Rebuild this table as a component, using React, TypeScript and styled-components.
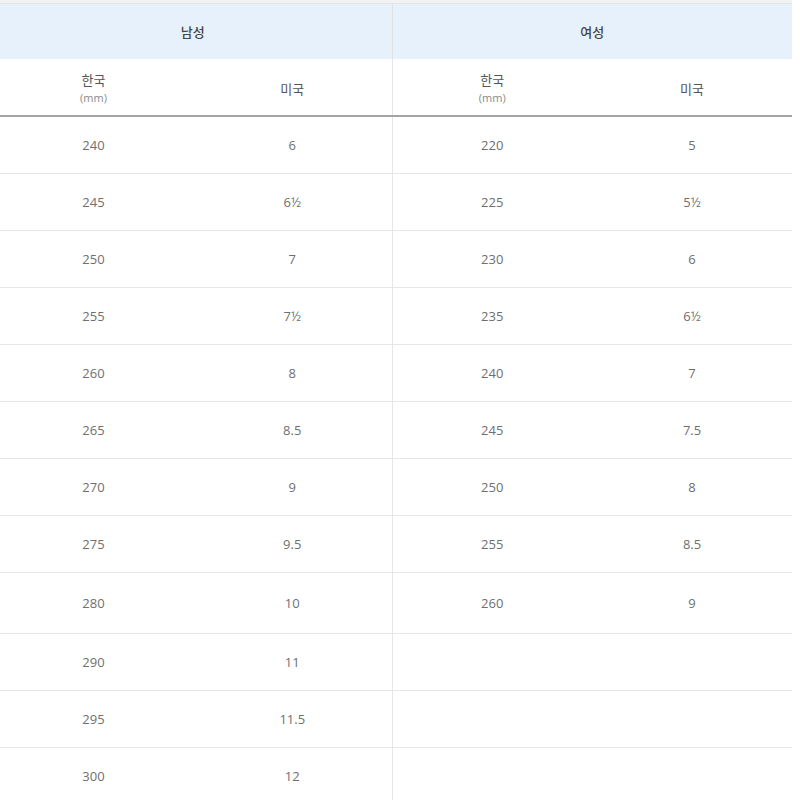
import { FC } from 'react';
import styled, { createGlobalStyle } from 'styled-components';

type SizeRow = {
  menKr: string;
  menUs: string;
  womenKr?: string;
  womenUs?: string;
  tall?: boolean;
};

const rows: SizeRow[] = [
  { menKr: '240', menUs: '6', womenKr: '220', womenUs: '5' },
  { menKr: '245', menUs: '6½', womenKr: '225', womenUs: '5½' },
  { menKr: '250', menUs: '7', womenKr: '230', womenUs: '6' },
  { menKr: '255', menUs: '7½', womenKr: '235', womenUs: '6½' },
  { menKr: '260', menUs: '8', womenKr: '240', womenUs: '7' },
  { menKr: '265', menUs: '8.5', womenKr: '245', womenUs: '7.5' },
  { menKr: '270', menUs: '9', womenKr: '250', womenUs: '8' },
  { menKr: '275', menUs: '9.5', womenKr: '255', womenUs: '8.5' },
  { menKr: '280', menUs: '10', womenKr: '260', womenUs: '9', tall: true },
  { menKr: '290', menUs: '11' },
  { menKr: '295', menUs: '11.5' },
  { menKr: '300', menUs: '12' },
];

const GlobalStyle = createGlobalStyle`
  html, body {
    margin: 0;
    padding: 0;
    background: #fff;
    overflow: hidden;
  }
  body {
    font-family: "Open Sans", "Noto Sans CJK KR", sans-serif;
  }
`;

const App: FC = () => {
  return (
    <Root>
      <GlobalStyle />
      <TopStrip />
      <Table>
        <colgroup>
          <col style={{ width: 199 }} />
          <col style={{ width: 199 }} />
          <col style={{ width: 200 }} />
          <col style={{ width: 200 }} />
        </colgroup>
        <thead>
          <tr>
            <GroupCell colSpan={2}>남성</GroupCell>
            <GroupCell colSpan={2} $divider>
              여성
            </GroupCell>
          </tr>
          <tr>
            <LabelCell>
              한국
              <Unit>(mm)</Unit>
            </LabelCell>
            <LabelCell>미국</LabelCell>
            <LabelCell $divider>
              한국
              <Unit>(mm)</Unit>
            </LabelCell>
            <LabelCell>미국</LabelCell>
          </tr>
        </thead>
        <tbody>
          {rows.map((row) => (
            <BodyRow key={row.menKr} $tall={row.tall}>
              <ValueCell>{row.menKr}</ValueCell>
              <ValueCell>{row.menUs}</ValueCell>
              <ValueCell $divider>{row.womenKr}</ValueCell>
              <ValueCell>{row.womenUs}</ValueCell>
            </BodyRow>
          ))}
        </tbody>
      </Table>
    </Root>
  );
};

export default App;

const Root = styled.div`
  width: 800px;
  height: 800px;
  overflow: hidden;
  background: #fff;
`;

const TopStrip = styled.div`
  width: 798px;
  margin-left: -6px;
  height: 3px;
  background: #f2f2f3;
  border-bottom: 1px solid #e3e4e6;
`;

const Table = styled.table`
  width: 798px;
  margin-left: -6px;
  border-collapse: collapse;
  table-layout: fixed;
  color: #6a6a6a;
`;

const GroupCell = styled.th<{ $divider?: boolean }>`
  height: 55px;
  padding: 0;
  background: #e7f1fb;
  font-family: "Noto Sans CJK KR", sans-serif;
  font-size: 13px;
  font-weight: 500;
  color: #444;
  text-align: center;
  vertical-align: middle;
  border-left: ${({ $divider }) => ($divider ? '1px solid #dfe3e8' : 'none')};
`;

const LabelCell = styled.th<{ $divider?: boolean }>`
  height: 52px;
  padding: 4px 0 0;
  font-family: "Noto Sans CJK KR", sans-serif;
  font-size: 13px;
  font-weight: 400;
  line-height: 18px;
  color: #555;
  text-align: center;
  vertical-align: middle;
  border-bottom: 2px solid #a3a3a3;
  border-left: ${({ $divider }) => ($divider ? '1px solid #e6e6e6' : 'none')};
`;

const Unit = styled.span`
  display: block;
  font-family: "Open Sans", sans-serif;
  font-size: 11px;
  line-height: 18px;
  color: #8a8a8a;
`;

const BodyRow = styled.tr<{ $tall?: boolean }>`
  height: ${({ $tall }) => ($tall ? 61 : 57)}px;
  border-bottom: 1px solid #e6e6e6;
`;

const ValueCell = styled.td<{ $divider?: boolean }>`
  padding: 0;
  font-family: "Open Sans", sans-serif;
  font-size: 13px;
  color: #6f6f6f;
  text-align: center;
  vertical-align: middle;
  border-left: ${({ $divider }) => ($divider ? '1px solid #e6e6e6' : 'none')};
`;
